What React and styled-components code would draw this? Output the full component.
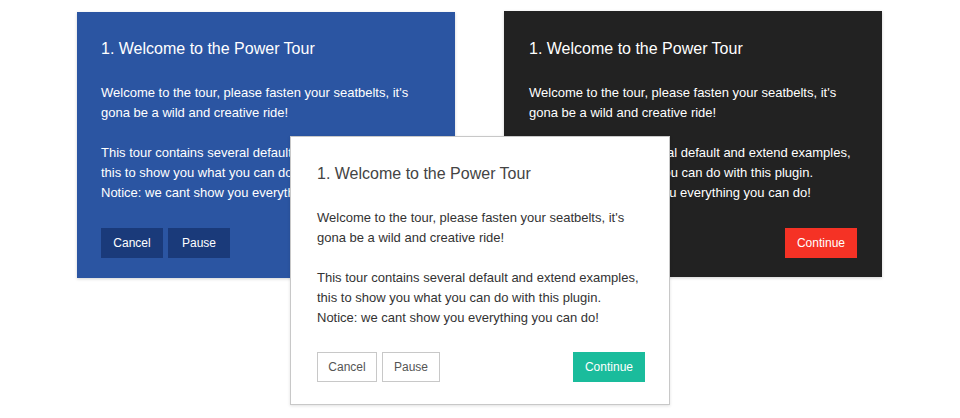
import React from "react";
import styled, { createGlobalStyle } from "styled-components";

const GlobalStyle = createGlobalStyle`
  html, body {
    margin: 0;
    padding: 0;
    background: #ffffff;
  }
  body {
    font-family: Arial, "Liberation Sans", sans-serif;
  }
`;

const themes = {
  blue: {
    bg: "#2b55a2",
    title: "#ffffff",
    text: "#ffffff",
    border: "none",
    pad: "27px 25px 20px 24px",
  },
  dark: {
    bg: "#222222",
    title: "#ffffff",
    text: "#ffffff",
    border: "none",
    pad: "28px 25px 19px 25px",
  },
  light: {
    bg: "#ffffff",
    title: "#444444",
    text: "#333333",
    border: "1px solid #c8c8c8",
    pad: "27px 24px 22px 26px",
  },
};

const Stage = styled.div`
  position: relative;
  width: 960px;
  height: 418px;
  padding: 11px 0 0 77px;
  box-sizing: border-box;
`;

const Row = styled.div`
  display: flex;
  align-items: flex-start;
  gap: 49px;
`;

const Card = styled.div`
  width: 378px;
  padding: ${(p) => themes[p.$variant].pad};
  box-sizing: border-box;
  background: ${(p) => themes[p.$variant].bg};
  border: ${(p) => themes[p.$variant].border};
  box-shadow: 0 1px 3px rgba(0, 0, 0, 0.18);
  margin-top: ${(p) => p.$offset || 0}px;
`;

const Overlay = styled(Card)`
  position: absolute;
  top: 136px;
  left: 290px;
  width: 380px;
  box-shadow: 0 1px 3px rgba(0, 0, 0, 0.12);
`;

const Title = styled.h3`
  margin: 0 0 24px;
  font-size: 16px;
  line-height: 20px;
  font-weight: normal;
  color: ${(p) => themes[p.$variant].title};
`;

const Body = styled.p`
  margin: 0 0 20px;
  font-size: 13px;
  line-height: 20px;
  color: ${(p) => themes[p.$variant].text};

  &:last-of-type {
    margin-bottom: ${(p) => (p.$variant === "light" ? 24 : 25)}px;
  }
`;

const Actions = styled.div`
  display: flex;
  align-items: center;
  gap: 5px;
`;

const Spacer = styled.div`
  flex: 1;
`;

const buttonSkins = {
  navy: "background: #1a3a7a; color: #ffffff; border: none; padding: 0 12px;",
  ghost: "background: #ffffff; color: #555555; border: 1px solid #c8c8c8; padding: 0 10px;",
  red: "background: #f53225; color: #ffffff; border: none; padding: 0 12px;",
  teal: "background: #1abc9c; color: #ffffff; border: none; padding: 0 12px;",
};

const Button = styled.button`
  box-sizing: border-box;
  height: 30px;
  min-width: ${(p) => p.$w}px;
  font-family: Arial, "Liberation Sans", sans-serif;
  font-size: 12px;
  cursor: pointer;
  ${(p) => buttonSkins[p.$skin]}
`;

function Copy({ variant }) {
  return (
    <>
      <Title $variant={variant}>1. Welcome to the Power Tour</Title>
      <Body $variant={variant}>
        Welcome to the tour, please fasten your seatbelts, it's
        <br />
        gona be a wild and creative ride!
      </Body>
      <Body $variant={variant}>
        This tour contains several default and extend examples,
        <br />
        this to show you what you can do with this plugin.
        <br />
        Notice: we cant show you everything you can do!
      </Body>
    </>
  );
}

export default function App() {
  return (
    <Stage>
      <GlobalStyle />
      <Row>
        <Card $variant="blue" $offset={1}>
          <Copy variant="blue" />
          <Actions>
            <Button $skin="navy" $w={62}>Cancel</Button>
            <Button $skin="navy" $w={62}>Pause</Button>
          </Actions>
        </Card>
        <Card $variant="dark">
          <Copy variant="dark" />
          <Actions>
            <Spacer />
            <Button $skin="red" $w={72}>Continue</Button>
          </Actions>
        </Card>
      </Row>
      <Overlay $variant="light">
        <Copy variant="light" />
        <Actions>
          <Button $skin="ghost" $w={60}>Cancel</Button>
          <Button $skin="ghost" $w={58}>Pause</Button>
          <Spacer />
          <Button $skin="teal" $w={72}>Continue</Button>
        </Actions>
      </Overlay>
    </Stage>
  );
}
